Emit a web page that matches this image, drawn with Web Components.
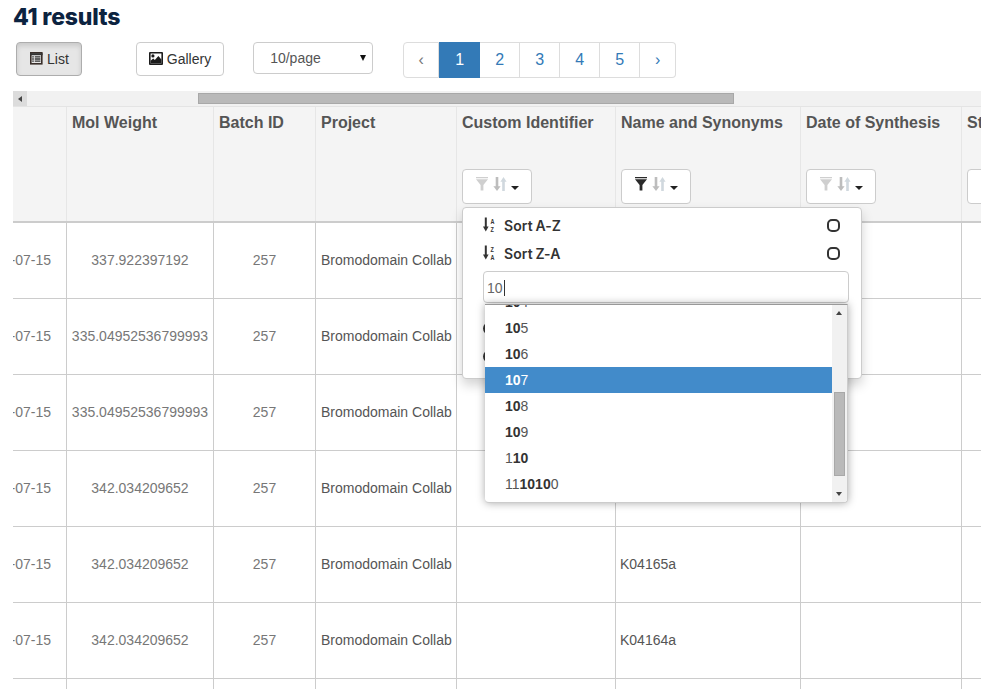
<!DOCTYPE html>
<html><head><meta charset="utf-8">
<style>
html,body{margin:0;padding:0;background:#fff;height:689px;overflow:hidden}
body{font-family:"Liberation Sans",Arial,sans-serif;font-size:14px;color:#333}
</style></head>
<body>
<results-page></results-page>
<script>
const icons={
 list:`<svg width="14" height="14" viewBox="0 0 14 14" style="margin-bottom:3px"><rect x="1.8" y="1.8" width="11" height="11" fill="#e8e8e8" stroke="#3a2f2a" stroke-width="1.6"/><path d="M1 3.2H13.6" stroke="#333" stroke-width="2"/><path d="M3.2 5.9h1.6M3.2 8h1.6M3.2 10.1h1.6M5.8 5.9h5.6M5.8 8h5.6M5.8 10.1h5.6" stroke="#333" stroke-width="1.3"/></svg>`,
 pic:`<svg width="14" height="13" viewBox="0 0 14 13" style="margin-bottom:1px"><path fill="#1c1c1c" fill-rule="evenodd" d="M1 0H13a1 1 0 0 1 1 1V12a1 1 0 0 1-1 1H1a1 1 0 0 1-1-1V1a1 1 0 0 1 1-1ZM1.6 1.6V11.4H12.4V1.6Z"/><circle cx="3.9" cy="3.9" r="1.6" fill="#1c1c1c"/><path fill="#1c1c1c" d="M1.6 11.4V8.8L4.2 6.4 5.8 8 9.4 4 12.4 7.4V11.4Z"/></svg>`,
};
function def(name,html){
 customElements.define(name,class extends HTMLElement{
  constructor(){super();this.attachShadow({mode:'open'}).innerHTML=typeof html==='function'?html(this):html;}
 });
}
def('tool-button',`<style>
:host{display:inline-flex;align-items:center;gap:4px;box-sizing:border-box;height:34px;padding:0 12px;border:1px solid #ccc;border-radius:4px;background:#fff;color:#333;font:14px "Liberation Sans",sans-serif}
:host([active]){background:#e6e6e6;border-color:#adadad;box-shadow:inset 0 3px 5px rgba(0,0,0,.125)}
::slotted(svg){display:block}
</style><slot></slot>`);
def('page-select',`<style>
:host{display:flex;align-items:center;justify-content:space-between;box-sizing:border-box;width:120px;height:32px;padding:0 6px 0 16px;border:1px solid #ccc;border-radius:4px;background:#fff;color:#555;font:14px "Liberation Sans",sans-serif}
i{width:0;height:0;border-left:3.5px solid transparent;border-right:3.5px solid transparent;border-top:6px solid #111;margin-top:-1px}
</style><slot></slot><i></i>`);
def('page-nav',`<style>
:host{display:flex;height:36px;box-sizing:border-box;font:16px "Liberation Sans",sans-serif}
span{display:flex;align-items:center;justify-content:center;box-sizing:border-box;height:36px;width:40px;border:1px solid #ddd;border-left:0;color:#337ab7;background:#fff}
span:first-of-type{width:36px;border-left:1px solid #ddd;border-radius:4px 0 0 4px;color:#777;}
span:last-of-type{width:36px;border-radius:0 4px 4px 0}
span.on{background:#337ab7;border-color:#337ab7;color:#fff;width:41px;padding-left:1px}
</style><span>‹</span><span class="on">1</span><span>2</span><span>3</span><span>4</span><span>5</span><span>›</span>`);
def('h-scrollbar',`<style>
:host{display:flex;height:16px;background:#f1f1f1;box-sizing:border-box;border-bottom:1px solid #e4e4e4}
b{display:flex;align-items:center;justify-content:center;width:14px;background:#dcdcdc;height:15px}
b i{width:0;height:0;border-top:3.5px solid transparent;border-bottom:3.5px solid transparent;border-right:4px solid #444}
u{display:block;box-sizing:border-box;width:536px;height:11px;margin:2px 0 0 171px;background:#b9b9b9;border:1px solid #a8a8a8}
</style><b><i></i></b><u></u>`);
def('filter-button',h=>{const act=h.hasAttribute('filtered');return `<style>
:host{display:flex;align-items:center;box-sizing:border-box;width:70px;height:35px;padding-left:13px;border:1px solid #ccc;border-radius:4px;background:#fff}
svg{display:block;margin-bottom:5px}
i{width:0;height:0;border-left:4px solid transparent;border-right:4px solid transparent;border-top:4px solid #222;margin:3px 0 0 4px}
</style>
<svg width="12" height="14" viewBox="0 0 12 14"><path d="M0 0H12V1.2H0ZM0 2.2H12L7.4 8V13.6H4.6V8Z" fill="${act?'#2a2a2a':'#cfcfcf'}"/></svg>
<svg width="14" height="14" viewBox="0 0 14 14" style="margin-left:5px"><path d="M4 0V10" stroke="#bdbdbd" stroke-width="2.6"/><path d="M.4 9.2H7.6L4 14Z" fill="#bdbdbd"/><path d="M10.5 14V4" stroke="#d0d8de" stroke-width="2.6"/><path d="M7.4 4.8H13.6L10.5 0Z" fill="#d0d8de"/></svg><i></i>`});
def('header-cell',`<style>
:host{display:flex;flex-direction:column;box-sizing:border-box;height:100%;border-right:1px solid #e6e6e6;padding:7px 5px 0;font:bold 16px/18px "Liberation Sans",sans-serif;color:#555;overflow:hidden;white-space:nowrap}
.t{height:55px}
</style><div class="t"><slot></slot></div><slot name="f"></slot>`);
def('table-cell',`<style>
:host{display:flex;align-items:center;justify-content:center;box-sizing:border-box;height:100%;border-right:1px solid #ccc;font:14px "Liberation Sans",sans-serif;color:#777;overflow:hidden;white-space:nowrap;padding-bottom:1px}
:host([left]){justify-content:flex-start;padding-left:5px;color:#555}
:host([name]){padding-left:4px}
:host([clip]){justify-content:flex-end;padding-right:15px}
</style><slot></slot>`);
const COLS='grid-template-columns:54px 147px 102px 141px 159px 185px 161px 60px;';
def('table-head',`<style>:host{display:grid;${COLS}height:114px;background:#f4f4f4;border-bottom:2px solid #ccc;box-sizing:content-box;width:1009px}</style><slot></slot>`);
def('table-row',`<style>:host{display:grid;${COLS}height:75px;border-bottom:1px solid #ccc;width:1009px}</style><slot></slot>`);
def('data-table',`<style>:host{display:block;overflow:hidden;width:968px}</style><slot></slot>`);
def('check-box',`<style>:host{display:block;box-sizing:border-box;width:13px;height:13px;border:2px solid #333;border-radius:5px}</style>`);
def('sort-item',h=>{const z=h.hasAttribute('desc');const a=z?'Z':'A',b=z?'A':'Z';const t=(c,y)=>`<text transform="translate(7.4 ${y}) scale(.8 1.1)" font-size="6.8" font-weight="700" font-family="Liberation Sans" fill="#333">${c}</text>`;return `<style>
:host{display:flex;align-items:center;height:28px;padding:0 21px 0 20px;font:600 14px "Inter","Open Sans",sans-serif;word-spacing:-1px;letter-spacing:.1px;color:#333}
svg{display:block;margin-right:9px}
span{flex:1}
</style><svg width="12" height="16" viewBox="0 0 12 16"><path d="M2.8 .5V11" stroke="#333" stroke-width="2"/><path d="M0 9.6H5.6L2.8 14.6Z" fill="#333"/>${t(a,6.5)}${t(b,15)}</svg><span><slot></slot></span><check-box></check-box>`});
def('suggest-list',`<style>
:host{display:flex;position:absolute;left:22px;top:96px;width:363px;height:199px;background:#fff;border-radius:0 0 4px 4px;border:1px solid #ccc;border-top-color:#999;border-left:0;box-sizing:border-box;box-shadow:0 0 9px rgba(0,0,0,.35);overflow:hidden;font:14px/26px "Liberation Sans",sans-serif;color:#555}
.l{flex:1;margin-top:-16px;overflow:hidden}
.bar{width:15px;background:#f1f1f1;position:relative;flex:none}
.bar i{position:absolute;left:4px;width:0;height:0;border-left:3.5px solid transparent;border-right:3.5px solid transparent}
.up{top:6px;border-bottom:4px solid #444}.dn{bottom:6px;border-top:4px solid #444}
.bar u{position:absolute;top:87px;left:2px;width:11px;height:84px;box-sizing:border-box;background:#b9b9b9;border:1px solid #a8a8a8}
.o{height:26px;padding-left:20px}
.o b{color:#333}
.o.on{background:#428bca;color:#fff}.o.on b{color:#fff}
</style><div class="l">
<div class="o"><b>10</b>4</div><div class="o"><b>10</b>5</div><div class="o"><b>10</b>6</div><div class="o on"><b>10</b>7</div><div class="o"><b>10</b>8</div><div class="o"><b>10</b>9</div><div class="o">1<b>10</b></div><div class="o">11<b>1010</b>0</div>
</div><div class="bar"><i class="up"></i><u></u><i class="dn"></i></div>`);
def('search-input',`<style>
:host{display:flex;align-items:center;box-sizing:border-box;margin:4px 12px 0 20px;height:32px;border:1px solid #ccc;border-radius:4px;padding:1px 0 0 3px;background:#fff;font:14px "Liberation Sans",sans-serif;color:#666}
i{display:block;width:1px;height:16px;background:#333;margin-left:1px}
</style><slot></slot><i></i>`);
def('radio-row',`<style>:host{display:flex;align-items:center;height:28px;padding-left:20px}i{display:block;width:13px;height:13px;border-radius:50%;background:#333}</style><i></i>`);
def('filter-popover',`<style>
:host{display:block;position:absolute;left:462px;top:207px;width:400px;height:172px;box-sizing:border-box;padding-top:3px;background:#fff;border:1px solid #ccc;border-radius:4px;box-shadow:0 6px 12px rgba(0,0,0,.175)}
.g{height:11px}
</style><slot></slot><div class="g"></div><radio-row></radio-row><radio-row></radio-row><suggest-list></suggest-list>`);
def('results-page',()=>{
 const heads=[['',0],['Mol Weight',0],['Batch ID',0],['Project',0],['Custom Identifier',1],['Name and Synonyms',2],['Date of Synthesis',1],['Status',1]];
 const h=heads.map(([t,f])=>`<header-cell>${t}${f?`<filter-button slot="f" ${f==2?'filtered':''}></filter-button>`:''}</header-cell>`).join('');
 const w=['337.922397192','335.04952536799993','335.04952536799993','342.034209652','342.034209652','342.034209652',''];
 const n=['','','','','K04165a','K04164a',''];
 const rows=w.map((m,i)=>`<table-row><table-cell clip>${m?'2015-07-15':''}</table-cell><table-cell>${m}</table-cell><table-cell>${m?'257':''}</table-cell><table-cell left>${m?'Bromodomain Collab':''}</table-cell><table-cell left></table-cell><table-cell left name>${n[i]}</table-cell><table-cell></table-cell><table-cell></table-cell></table-row>`).join('');
 return `<style>
:host{display:block;position:relative;height:689px;overflow:hidden}
h1{margin:0;padding:4px 0 0 13px;height:25px;font:800 23px/26px "Inter","Open Sans",sans-serif;letter-spacing:-.2px;color:#0c2340}
.bar{display:flex;align-items:flex-start;margin:13px 0 0 16px;height:49px}
.b2{margin-left:54px}.s{margin-left:29px}.p{margin-left:30px}
.wrap{margin-left:13px}
</style>
<h1>41 results</h1>
<div class="bar"><tool-button active>${icons.list}List</tool-button><tool-button class="b2">${icons.pic}Gallery</tool-button><page-select class="s">10/page</page-select><page-nav class="p"></page-nav></div>
<div class="wrap"><h-scrollbar></h-scrollbar><data-table><table-head>${h}</table-head>${rows}</data-table></div>
<filter-popover><sort-item>Sort A-Z</sort-item><sort-item desc>Sort Z-A</sort-item><search-input>10</search-input></filter-popover>`});
</script>
</body></html>
